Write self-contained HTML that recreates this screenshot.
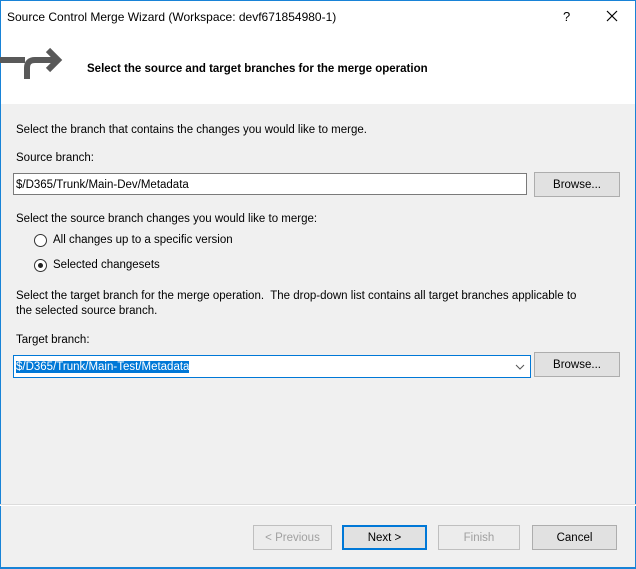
<!DOCTYPE html>
<html><head><style>
*{box-sizing:border-box;margin:0;padding:0}
body{width:636px;height:569px;background:#f0f0f0;font-family:"Liberation Sans",sans-serif;font-size:11.5px;color:#000;position:relative;overflow:hidden}
.a{position:absolute;white-space:nowrap}
.hdr{position:absolute;left:0;top:0;width:636px;height:104px;background:#fff}
.inp{position:absolute;background:#fff;border:1px solid #7a7a7a;padding:4px 2px 2px;line-height:14px}
.btn{position:absolute;background:#e1e1e1;border:1px solid #adadad;text-align:center;line-height:25px}
.dis{color:#a0a0a0;border-color:#bfbfbf;background:#ececec}
.rad{position:absolute;width:13px;height:13px;border:1px solid #333;border-radius:50%;background:#fff}
</style></head><body>
<div class="hdr"></div>
<div style="position:absolute;left:0;top:0;width:636px;height:1px;background:#1883d7"></div>
<div style="position:absolute;left:0;bottom:0;width:636px;height:2px;background:#1883d7"></div>
<div style="position:absolute;left:0;top:0;width:1px;height:569px;background:#1883d7"></div>
<div style="position:absolute;right:0;top:0;width:1px;height:569px;background:#1883d7"></div>
<div class="a" style="left:7px;top:10px;font-size:12px">Source Control Merge Wizard (Workspace: devf671854980-1)</div>
<div class="a" style="left:563px;top:9px;font-size:13px">?</div>
<svg class="a" style="left:606px;top:10px" width="12" height="12"><path d="M1 1L11 11M11 1L1 11" stroke="#000" stroke-width="1.2"/></svg>
<svg class="a" style="left:0;top:45px" width="70" height="40" viewBox="0 45 70 40"><g fill="none" stroke="#595959" stroke-width="6"><path d="M0 60H25"/><path d="M27 79V68Q27 60 35 60H58"/><path d="M48 50L58 60L48 70"/></g></svg>
<div class="a" style="left:87px;top:63px;font-weight:bold;font-size:11.5px">Select the source and target branches for the merge operation</div>
<div class="a" style="left:16px;top:124px">Select the branch that contains the changes you would like to merge.</div>
<div class="a" style="left:16px;top:152px">Source branch:</div>
<div class="inp" style="left:13px;top:173px;width:514px;height:22px">$/D365/Trunk/Main-Dev/Metadata</div>
<div class="btn" style="left:534px;top:172px;width:86px;height:25px">Browse...</div>
<div class="a" style="left:16px;top:213px">Select the source branch changes you would like to merge:</div>
<div class="rad" style="left:34px;top:234px"></div>
<div class="a" style="left:53px;top:234px">All changes up to a specific version</div>
<div class="rad" style="left:34px;top:259px"><div style="position:absolute;left:3px;top:3px;width:5px;height:5px;border-radius:50%;background:#222"></div></div>
<div class="a" style="left:53px;top:259px">Selected changesets</div>
<div class="a" style="left:16px;top:290px">Select the target branch for the merge operation.&nbsp; The drop-down list contains all target branches applicable to</div>
<div class="a" style="left:16px;top:305px">the selected source branch.</div>
<div class="a" style="left:16px;top:334px">Target branch:</div>
<div class="inp" style="left:13px;top:355px;width:518px;height:23px;border-color:#0078d7"><span style="background:#0078d7;color:#fff">$/D365/Trunk/Main-Test/Metadata</span></div>
<svg class="a" style="left:515px;top:364px" width="10" height="7"><path d="M1 1L5 5L9 1" fill="none" stroke="#555"/></svg>
<div class="btn" style="left:534px;top:352px;width:86px;height:25px">Browse...</div>
<div style="position:absolute;left:0;top:505px;width:636px;height:1px;background:#fff"></div>
<div style="position:absolute;left:0;top:504px;width:636px;height:1px;background:#dcdcdc"></div>
<div class="btn dis" style="left:253px;top:525px;width:79px;height:25px">&lt; Previous</div>
<div class="btn" style="left:342px;top:525px;width:85px;height:25px;border:2px solid #0078d7;line-height:23px">Next &gt;</div>
<div class="btn dis" style="left:438px;top:525px;width:82px;height:25px">Finish</div>
<div class="btn" style="left:532px;top:525px;width:85px;height:25px">Cancel</div>
</body></html>
